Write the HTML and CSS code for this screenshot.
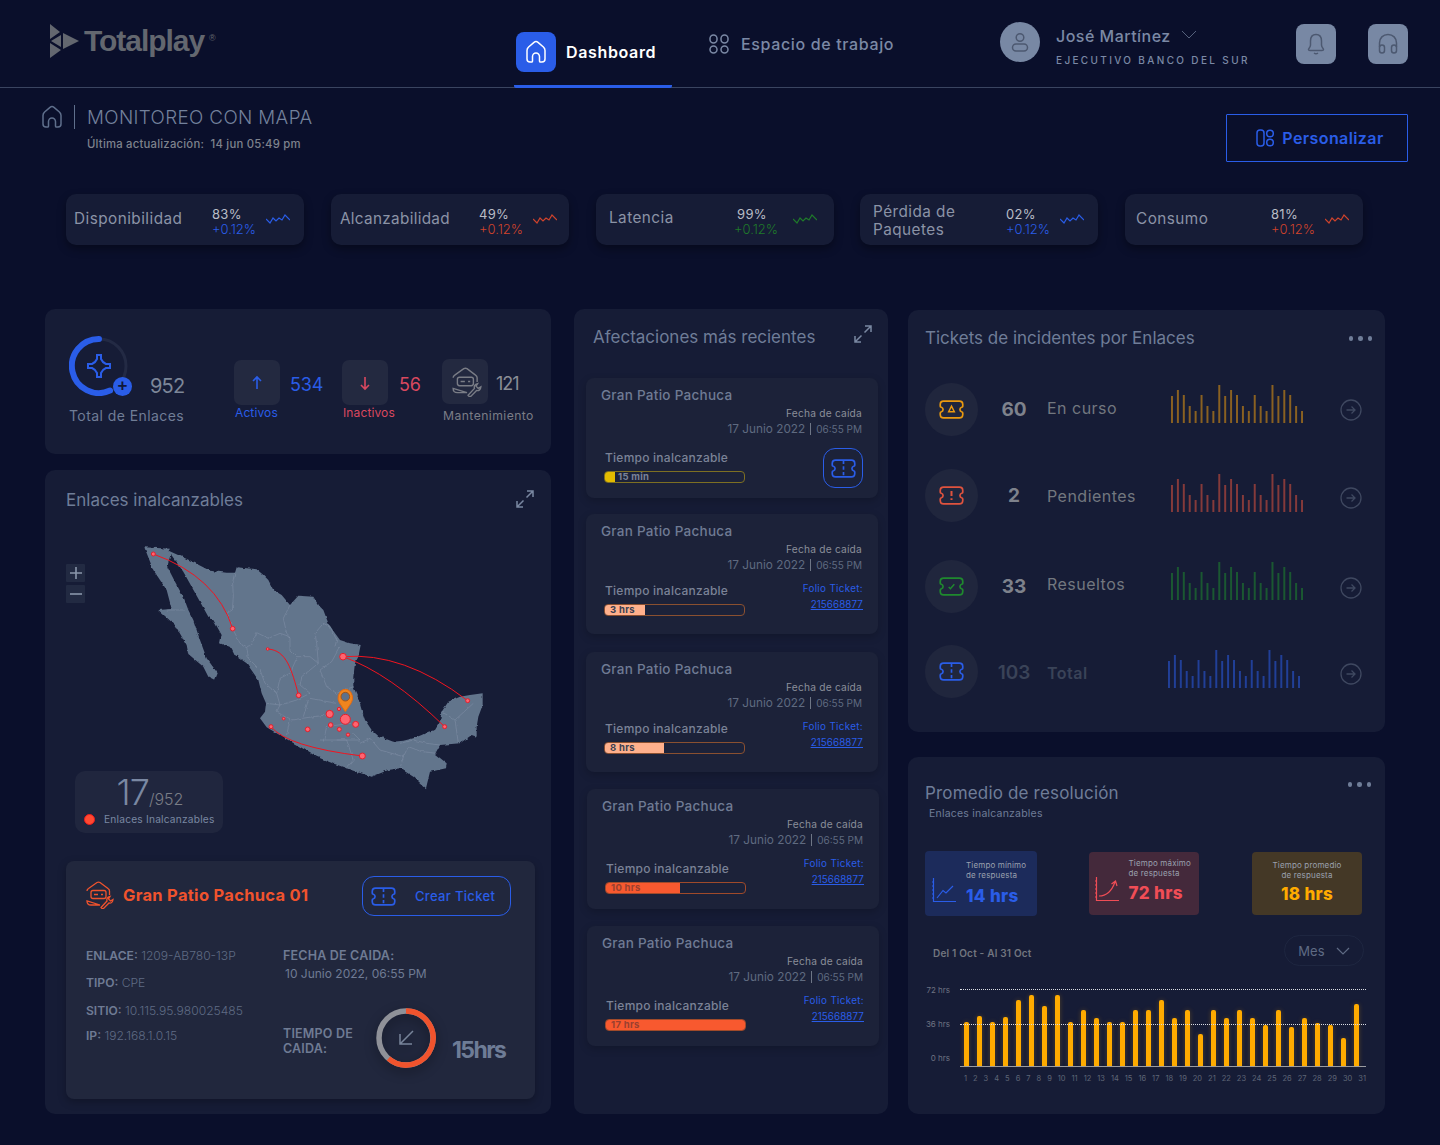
FILE: index.html
```html
<!DOCTYPE html>
<html lang="es">
<head>
<meta charset="utf-8">
<title>Monitoreo con mapa</title>
<link rel="stylesheet" href="styles.css">
</head>
<body>
<svg class="defs" width="0" height="0" aria-hidden="true">
  <symbol id="home" viewBox="0 0 24 24"><path d="M3 19V10.500Q3 8.500 4.600 7L10 2.400Q12 .8 14 2.400L19.400 7Q21 8.500 21 10.500V19Q21 22 18 22H16Q15.500 22 15.500 21V16.500A3.500 3.500 0 0 0 8.500 16.500V21Q8.500 22 8 22H6Q3 22 3 19Z" fill="none" stroke="currentColor" stroke-width="1.500"/></symbol>
  <symbol id="ticket" viewBox="0 0 24 24"><path d="M5 4.500H19Q22 4.500 22 7.500V9Q22 9.800 21 10Q19.500 10.500 19.500 12Q19.500 13.500 21 14Q22 14.200 22 15V16.500Q22 19.500 19 19.500H5Q2 19.500 2 16.500V15Q2 14.200 3 14Q4.500 13.500 4.500 12Q4.500 10.500 3 10Q2 9.800 2 9V7.500Q2 4.500 5 4.500Z" fill="none" stroke="currentColor" stroke-width="1.500"/></symbol>
  <symbol id="expand" viewBox="0 0 18 18"><path d="M10.500 7.500L17 1M11 1H17V7M7.500 10.500L1 17M1 11V17H7" fill="none" stroke="currentColor" stroke-width="1.500"/></symbol>
  <symbol id="bars" viewBox="0 0 135 38" preserveAspectRatio="none"><path d="M1 38V11M7 38V5M13 38V10M19 38V21M25 38V26M31 38V10M37 38V21M43 38V26M49 38V0M55 38V11M61 38V5M67 38V10M73 38V21M79 38V26M85 38V10M91 38V21M97 38V26M103 38V0M109 38V11M115 38V5M121 38V10M127 38V21M133 38V26" stroke="currentColor" stroke-width="2" fill="none"/></symbol>
  <symbol id="arrow" viewBox="0 0 22 22"><circle cx="11" cy="11" r="10" fill="none" stroke="currentColor" stroke-width="1.300"/><path d="M6.500 11H15M11.500 7.500L15 11L11.500 14.500" fill="none" stroke="currentColor" stroke-width="1.300"/></symbol>
  <symbol id="wave" viewBox="0 0 24 12"><path d="M0 5L4 9L7 4L10 7L13 4L16 6L19 1L24 6" fill="none" stroke="currentColor" stroke-width="1.200"/></symbol>
  <symbol id="maint" viewBox="0 0 30 28"><path d="M2 10Q2 8.500 3.500 7.500L12 1.500Q13.500 .7 15 1.500L23 7.500Q24.500 8.500 24.500 10V14M15 24H6Q2 24 2 20Z" fill="none" stroke="currentColor" stroke-width="1.300"/><rect x="6" y="9.500" width="15" height="8" rx="2" fill="none" stroke="currentColor" stroke-width="1.300"/><path d="M9 13.500H13M16 13.500H18" stroke="currentColor" stroke-width="1.300"/><path d="M16 26.500L22 20Q21 16.500 25 15.500L23.500 18L25.500 20L28 18.500Q27.500 22.500 24 22L18.500 27.500Q17 28 16 26.500Z" fill="none" stroke="currentColor" stroke-width="1.300"/></symbol>
</svg>

<header class="topbar">
  <div class="logo">
    <svg class="logo-mark" viewBox="0 0 30 34"><path d="M1 0L11 8L1 15ZM14 9L30 17L14 25ZM12 11V23L2 17ZM1 19L12 26L1 34Z"/></svg>
    <span class="logo-text">Totalplay</span><span class="logo-reg">®</span>
  </div>
  <nav class="nav">
    <a class="nav-item active"><span class="nav-tile"><svg class="ico-24"><use href="#home"/></svg></span><span>Dashboard</span></a>
    <a class="nav-item muted">
      <svg class="ico-work" viewBox="0 0 20 20"><g fill="none" stroke="currentColor" stroke-width="1.500"><rect x="1" y="1" width="7" height="8" rx="3.500"/><rect x="12" y="1" width="7" height="8" rx="3.500"/><rect x="1" y="12" width="7" height="7" rx="3.500"/><rect x="12" y="12" width="7" height="7" rx="3.500"/></g></svg>
      <span>Espacio de trabajo</span>
    </a>
  </nav>
  <div class="user">
    <span class="avatar"><svg viewBox="0 0 24 24" width="24" height="24"><g fill="none" stroke="#4c5870" stroke-width="1.500"><circle cx="12" cy="7.500" r="3.800"/><rect x="4.500" y="14" width="15" height="7" rx="3.500"/></g></svg></span>
    <div class="user-info">
      <div class="user-name">José Martínez <svg class="chev" viewBox="0 0 16 9"><path d="M1 1L8 8L15 1" fill="none" stroke="currentColor"/></svg></div>
      <div class="user-role">EJECUTIVO BANCO DEL SUR</div>
    </div>
  </div>
  <span class="tool tool-first"><svg viewBox="0 0 24 24" width="24" height="24"><path d="M12 2.500C8 2.500 6.500 5.500 6.500 9V13C6.500 15 5 16 4.500 17.500Q4.500 18.500 6 18.500H18Q19.500 18.500 19.500 17.500C19 16 17.500 15 17.500 13V9C17.500 5.500 16 2.500 12 2.500ZM10 21Q12 22.500 14 21" fill="none" stroke="#4c5870" stroke-width="1.500"/></svg></span>
  <span class="tool"><svg viewBox="0 0 24 24" width="24" height="24"><path d="M3.500 15V11C3.500 6 7 2.500 12 2.500S20.500 6 20.500 11V15" fill="none" stroke="#4c5870" stroke-width="1.500"/><rect x="3.500" y="13" width="5" height="8" rx="2.500" fill="none" stroke="#4c5870" stroke-width="1.500"/><rect x="15.500" y="13" width="5" height="8" rx="2.500" fill="none" stroke="#4c5870" stroke-width="1.500"/></svg></span>
</header>

<section class="crumbs">
  <div>
    <div class="crumb-line">
      <svg class="crumb-home"><use href="#home"/></svg>
      <h1>MONITOREO CON MAPA</h1>
    </div>
    <p class="updated">Última actualización:&nbsp; 14 jun 05:49 pm</p>
  </div>
  <button class="customize">
    <svg viewBox="0 0 18 18" width="18" height="18"><g fill="none" stroke="currentColor" stroke-width="1.500"><rect x="1" y="1" width="7" height="16" rx="3"/><circle cx="14" cy="4.500" r="3.300"/><circle cx="14" cy="13.500" r="3.300"/></g></svg>
    Personalizar
  </button>
</section>

<section class="kpis">
  <article class="kpi"><span class="kpi-name">Disponibilidad</span><div class="kpi-val"><b>83%</b><i class="blue">+0.12%</i></div><svg class="wave blue"><use href="#wave"/></svg></article>
  <article class="kpi"><span class="kpi-name">Alcanzabilidad</span><div class="kpi-val"><b>49%</b><i class="red">+0.12%</i></div><svg class="wave red"><use href="#wave"/></svg></article>
  <article class="kpi"><span class="kpi-name">Latencia</span><div class="kpi-val"><b class="ind">99%</b><i class="green">+0.12%</i></div><svg class="wave green"><use href="#wave"/></svg></article>
  <article class="kpi"><span class="kpi-name two">Pérdida de Paquetes</span><div class="kpi-val"><b>02%</b><i class="blue">+0.12%</i></div><svg class="wave blue"><use href="#wave"/></svg></article>
  <article class="kpi"><span class="kpi-name">Consumo</span><div class="kpi-val"><b>81%</b><i class="red">+0.12%</i></div><svg class="wave red"><use href="#wave"/></svg></article>
</section>

<main class="board">
  <div class="col-left">
    <section class="panel total">
      <div class="total-main">
        <div class="total-top">
          <div class="ring">
            <svg viewBox="0 0 60 60" width="60" height="60"><circle cx="30" cy="30" r="27" fill="none" stroke="#232a44" stroke-width="3"/><path d="M30 3A27 27 0 1 0 41 54.600" fill="none" stroke="#2a5de8" stroke-width="6" stroke-linecap="round"/><path d="M28 19H32V23Q33.500 26.500 37 28H41V32H37Q33.500 33.500 32 37V41H28V37Q26.500 33.500 23 32H19V28H23Q26.500 26.500 28 23Z" fill="none" stroke="#2a5de8" stroke-width="2"/></svg>
            <span class="ring-plus">+</span>
          </div>
          <span class="total-num">952</span>
        </div>
        <div class="total-label">Total de Enlaces</div>
      </div>
      <div class="stat stat-a">
        <div class="stat-row"><span class="stat-tile blue"><svg viewBox="0 0 16 16" width="16" height="16"><path d="M8 14V2M4 6L8 2L12 6" fill="none" stroke="currentColor" stroke-width="1.600"/></svg></span><span class="stat-num blue">534</span></div>
        <div class="stat-label blue">Activos</div>
      </div>
      <div class="stat stat-b">
        <div class="stat-row"><span class="stat-tile rose"><svg viewBox="0 0 16 16" width="16" height="16"><path d="M8 2V14M4 10L8 14L12 10" fill="none" stroke="currentColor" stroke-width="1.600"/></svg></span><span class="stat-num rose">56</span></div>
        <div class="stat-label rose">Inactivos</div>
      </div>
      <div class="stat stat-c">
        <div class="stat-row"><span class="stat-tile grey"><svg class="maint"><use href="#maint"/></svg></span><span class="stat-num grey">121</span></div>
        <div class="stat-label grey">Mantenimiento</div>
      </div>
    </section>

    <section class="panel map-panel">
      <div class="panel-head">
        <h2>Enlaces inalcanzables</h2>
        <svg class="expand"><use href="#expand"/></svg>
      </div>
      <div class="map">
        <svg class="map-svg" viewBox="0 0 1320 930" width="440" height="310">
          <defs>
            <filter id="rough" filterUnits="userSpaceOnUse" x="0" y="0" width="1320" height="930">
              <feTurbulence type="fractalNoise" baseFrequency="0.07" numOctaves="2" seed="4" result="n"/>
              <feDisplacementMap in="SourceGraphic" in2="n" scale="9" xChannelSelector="R" yChannelSelector="G"/>
            </filter>
          </defs>
          <g filter="url(#rough)">
            <path class="land" d="M253,52L330,56L326,62L392,92L450,122L500,128L525,128L530,112L590,118L610,135L625,150L640,180L665,195L690,225L715,197L760,200L775,225L790,240L805,280L825,310L840,330L870,340L902,345L895,380L885,400L880,440L880,470L895,505L905,540L915,570L935,600L955,618L1000,635L1030,632L1060,625L1085,615L1105,605L1125,600L1140,575L1145,545L1165,515L1200,500L1230,495L1268,490L1268,525L1255,560L1250,590L1250,620L1235,615L1200,640L1140,645L1125,672L1160,700L1158,715L1110,725L1098,775L1060,740L1020,715L985,720L935,740L880,722L810,697L770,680L720,650L670,622L620,592L600,565L615,545L618,520L605,490L595,450L560,400L525,375L515,355L480,340L485,315L460,270L445,260L420,215L395,170L370,125L332,72L322,110L345,155L372,205L385,240L400,270L420,330L440,385L473,430L465,450L445,440L430,410L385,372L380,345L345,285L295,240L335,237L320,180L280,120Z"/>
            <path class="borders" d="M525,128L518,160L520,200L517,240L500,250L520,300L540,340L560,350M690,225L670,265L680,310L690,320L660,310L625,325L590,308L575,345L560,350M560,350L565,385L600,420L615,460L650,490M690,320L690,360L710,380L750,380L775,400L770,340L765,310L790,280L810,290L830,330L825,350M840,350L815,395L780,420L800,470L830,490L880,470M775,400L725,440L720,465L750,490L710,510L660,525L650,490L660,445L690,430L710,385M620,520L660,525L650,545L690,570L680,615M750,505L830,520M730,560L745,510M695,570L760,560L800,555M790,635L800,590L870,580M830,630L900,630L880,610M780,630L860,630L880,690L860,715M900,640L930,625L960,660L1030,680L1020,715M1030,680L1045,650L1085,665L1130,670M1020,640L1060,630L1100,640L1140,645M1145,545L1185,570L1240,520M1185,570L1195,640M320,240L375,240"/>
          </g>
          <path class="routes" d="M280,72Q470,140 518,296M623,357C680,360 695,420 716,496M849,380Q1030,365 1223,512M849,380Q990,430 1154,590M633,590Q680,650 907,678"/>
          <g class="dots">
            <circle cx="280" cy="72" r="6"/><circle cx="518" cy="296" r="7"/><circle cx="623" cy="357" r="4"/><circle cx="716" cy="496" r="7"/><circle cx="849" cy="380" r="10"/><circle cx="856" cy="568" r="15"/><circle cx="809" cy="552" r="11"/><circle cx="837" cy="537" r="5"/><circle cx="812" cy="585" r="7"/><circle cx="887" cy="583" r="9"/><circle cx="838" cy="598" r="6"/><circle cx="864" cy="614" r="5"/><circle cx="743" cy="598" r="7"/><circle cx="671" cy="566" r="4"/><circle cx="633" cy="590" r="6"/><circle cx="907" cy="678" r="9"/><circle cx="1154" cy="590" r="6"/><circle cx="1223" cy="512" r="6"/>
          </g>
          <path d="M856,545L838,518Q832,508 835,497Q841,478 856,478Q871,478 877,497Q880,508 874,518Z" fill="#f0851e" stroke="#e66a10" stroke-width="3"/>
          <circle cx="856" cy="500" r="13" fill="#5f7189" stroke="#a35518" stroke-width="3"/>
        </svg>
        <div class="zoomers">
          <button aria-label="Acercar"><svg viewBox="0 0 12 12" width="12" height="12"><path d="M0 6H12M6 0V12" stroke="currentColor" stroke-width="1.600"/></svg></button>
          <button aria-label="Alejar"><svg viewBox="0 0 12 12" width="12" height="12"><path d="M0 6H12" stroke="currentColor" stroke-width="1.600"/></svg></button>
        </div>
        <div class="counter">
          <div class="counter-num"><span>17</span><small>/952</small></div>
          <div class="counter-label"><i></i>Enlaces Inalcanzables</div>
        </div>
      </div>
      <article class="detail">
        <div class="detail-head">
          <svg class="detail-ico"><use href="#maint"/></svg>
          <h3>Gran Patio Pachuca 01</h3>
          <button class="new-ticket"><svg class="ico-ticket" viewBox="0 0 24 24"><use href="#ticket"/><path d="M12 5V19" stroke="#2a5de8" stroke-width="1.500" stroke-dasharray="3 2"/></svg><span>Crear Ticket</span></button>
        </div>
        <div class="detail-body">
          <div class="facts">
            <p><b>ENLACE:</b> 1209-AB780-13P</p>
            <p><b>TIPO:</b> CPE</p>
            <p><b>SITIO:</b> 10.115.95.980025485</p>
            <p><b>IP:</b> 192.168.1.0.15</p>
          </div>
          <div class="downtime">
            <p class="down-label">FECHA DE CAIDA:</p>
            <p class="down-date">10 Junio 2022, 06:55 PM</p>
            <div class="down-row">
              <p class="down-label down-time">TIEMPO DE<br>CAIDA:</p>
              <svg class="down-ring" viewBox="0 0 60 60" width="60" height="60"><circle cx="30" cy="30" r="27" fill="none" stroke="#8f9198" stroke-width="5.500"/><path d="M30 3A27 27 0 1 1 12.500 50.500" fill="none" stroke="#f0532d" stroke-width="5.500"/><path d="M37 23L24 36M24 26V36H36" fill="none" stroke="#78849a" stroke-width="1.500"/></svg>
              <span class="down-total">15hrs</span>
            </div>
          </div>
        </div>
      </article>
    </section>
  </div>

  <section class="panel feed">
    <div class="panel-head feed-head">
      <h2>Afectaciones más recientes</h2>
      <svg class="expand"><use href="#expand"/></svg>
    </div>
    <article class="fcard first">
      <h4>Gran Patio Pachuca</h4>
      <p class="f-label">Fecha de caída</p>
      <p class="f-date">17 Junio 2022<span>06:55 PM</span></p>
      <div class="f-row">
        <div class="f-left"><p class="f-time">Tiempo inalcanzable</p><div class="bar bar-y"><i style="width:11px"></i><em>15 min</em></div></div>
        <button class="f-btn"><svg viewBox="0 0 24 24"><use href="#ticket"/><path d="M12 5V19" stroke="#2a5de8" stroke-width="1.500" stroke-dasharray="3 2"/></svg></button>
      </div>
    </article>
    <article class="fcard second">
      <h4>Gran Patio Pachuca</h4>
      <p class="f-label">Fecha de caída</p>
      <p class="f-date">17 Junio 2022<span>06:55 PM</span></p>
      <div class="f-row">
        <div class="f-left"><p class="f-time">Tiempo inalcanzable</p><div class="bar bar-p"><i style="width:41px"></i><em class="dark">3 hrs</em></div></div>
        <div class="folio"><p>Folio Ticket:</p><a>215668877</a></div>
      </div>
    </article>
    <article class="fcard third">
      <h4>Gran Patio Pachuca</h4>
      <p class="f-label">Fecha de caída</p>
      <p class="f-date">17 Junio 2022<span>06:55 PM</span></p>
      <div class="f-row">
        <div class="f-left"><p class="f-time">Tiempo inalcanzable</p><div class="bar bar-p"><i style="width:60px"></i><em class="dark">8 hrs</em></div></div>
        <div class="folio"><p>Folio Ticket:</p><a>215668877</a></div>
      </div>
    </article>
    <article class="fcard shift">
      <h4>Gran Patio Pachuca</h4>
      <p class="f-label">Fecha de caída</p>
      <p class="f-date">17 Junio 2022<span>06:55 PM</span></p>
      <div class="f-row">
        <div class="f-left"><p class="f-time">Tiempo inalcanzable</p><div class="bar bar-o"><i style="width:75px"></i><em class="mid">10 hrs</em></div></div>
        <div class="folio"><p>Folio Ticket:</p><a>215668877</a></div>
      </div>
    </article>
    <article class="fcard shift">
      <h4>Gran Patio Pachuca</h4>
      <p class="f-label">Fecha de caída</p>
      <p class="f-date">17 Junio 2022<span>06:55 PM</span></p>
      <div class="f-row">
        <div class="f-left"><p class="f-time">Tiempo inalcanzable</p><div class="bar bar-o"><i style="width:142px"></i><em class="mid">17 hrs</em></div></div>
        <div class="folio"><p>Folio Ticket:</p><a>215668877</a></div>
      </div>
    </article>
  </section>

  <div class="col-right">
    <section class="panel tickets">
      <div class="panel-head">
        <h2>Tickets de incidentes por Enlaces</h2>
        <span class="more"><i></i><i></i><i></i></span>
      </div>
      <div class="t-row r1">
        <span class="t-circle amber"><svg viewBox="0 0 24 24"><use href="#ticket"/><path d="M12 9L14.500 14H9.500Z" fill="none" stroke="currentColor" stroke-width="1.300"/></svg></span>
        <b class="t-num">60</b><span class="t-label">En curso</span>
        <svg class="t-bars amber"><use href="#bars"/></svg>
        <svg class="t-arrow"><use href="#arrow"/></svg>
      </div>
      <div class="t-row r2">
        <span class="t-circle coral"><svg viewBox="0 0 24 24"><use href="#ticket"/><path d="M12 8V12.500M12 14.500V16" fill="none" stroke="currentColor" stroke-width="1.800"/></svg></span>
        <b class="t-num">2</b><span class="t-label">Pendientes</span>
        <svg class="t-bars coral"><use href="#bars"/></svg>
        <svg class="t-arrow"><use href="#arrow"/></svg>
      </div>
      <div class="t-row r3">
        <span class="t-circle lime"><svg viewBox="0 0 24 24"><use href="#ticket"/><path d="M9.500 12.500L11 14L14.500 10" fill="none" stroke="currentColor" stroke-width="1.300"/></svg></span>
        <b class="t-num">33</b><span class="t-label">Resueltos</span>
        <svg class="t-bars lime"><use href="#bars"/></svg>
        <svg class="t-arrow"><use href="#arrow"/></svg>
      </div>
      <div class="t-row r4">
        <span class="t-circle azure"><svg viewBox="0 0 24 24"><use href="#ticket"/><path d="M12 5V19" stroke="currentColor" stroke-width="1.500" stroke-dasharray="3 2"/></svg></span>
        <b class="t-num">103</b><span class="t-label">Total</span>
        <svg class="t-bars azure"><use href="#bars"/></svg>
        <svg class="t-arrow"><use href="#arrow"/></svg>
      </div>
    </section>

    <section class="panel average">
      <div class="panel-head avg-head">
        <div>
          <h2>Promedio de resolución</h2>
          <p class="avg-sub">Enlaces inalcanzables</p>
        </div>
        <span class="more"><i></i><i></i><i></i></span>
      </div>
      <div class="tiles">
        <div class="tile tile-min">
          <svg class="tile-ico" viewBox="0 0 24 24"><path d="M1.500 0V23.500H24M0 4H1.500M0 8H1.500M0 12H1.500M0 16H1.500M0 20H1.500M5 20L11 12.500L14 15L21 8" fill="none" stroke="currentColor" stroke-width="1.200"/></svg>
          <div><p>Tiempo mínimo<br>de respuesta</p><strong>14 hrs</strong></div>
        </div>
        <div class="tile tile-max">
          <svg class="tile-ico" viewBox="0 0 24 24"><path d="M1.500 0V23.500H24M0 4H1.500M0 8H1.500M0 12H1.500M0 16H1.500M0 20H1.500M4 19Q15 19 20 5M16.500 7L20.500 4L22 9" fill="none" stroke="currentColor" stroke-width="1.200"/></svg>
          <div><p>Tiempo máximo<br>de respuesta</p><strong>72 hrs</strong></div>
        </div>
        <div class="tile tile-avg">
          <div><p>Tiempo promedio<br>de respuesta</p><strong>18 hrs</strong></div>
        </div>
      </div>
      <div class="range">
        <span class="range-text">Del 1 Oct - Al 31 Oct</span>
        <span class="pill">Mes <svg viewBox="0 0 14 8" width="14" height="8"><path d="M1 1L7 7L13 1" fill="none" stroke="currentColor" stroke-width="1.200"/></svg></span>
      </div>
      <div class="chart">
        <div class="y-axis"><span>72 hrs</span><span>36 hrs</span><span>0 hrs</span></div>
        <div class="plot-wrap">
          <div class="plot">
            <i class="rule rule-top"></i><i class="rule rule-mid"></i>
            <span style="height:44px"></span><span style="height:50px"></span><span style="height:44px"></span><span style="height:49px"></span><span style="height:66px"></span><span style="height:71px"></span><span style="height:60px"></span><span style="height:71px"></span><span style="height:44px"></span><span style="height:56px"></span><span style="height:48px"></span><span style="height:44px"></span><span style="height:44px"></span><span style="height:56px"></span><span style="height:56px"></span><span style="height:66px"></span><span style="height:48px"></span><span style="height:56px"></span><span style="height:32px"></span><span style="height:56px"></span><span style="height:48px"></span><span style="height:56px"></span><span style="height:48px"></span><span style="height:41px"></span><span style="height:56px"></span><span style="height:39px"></span><span style="height:48px"></span><span style="height:43px"></span><span style="height:41px"></span><span style="height:28px"></span><span style="height:62px"></span>
          </div>
          <div class="x-axis"><span>1</span><span>2</span><span>3</span><span>4</span><span>5</span><span>6</span><span>7</span><span>8</span><span>9</span><span>10</span><span>11</span><span>12</span><span>13</span><span>14</span><span>15</span><span>16</span><span>17</span><span>18</span><span>19</span><span>20</span><span>21</span><span>22</span><span>23</span><span>24</span><span>25</span><span>26</span><span>27</span><span>28</span><span>29</span><span>30</span><span>31</span></div>
        </div>
      </div>
    </section>
  </div>
</main>
</body>
</html>
```
FILE: styles.css
```css
* { box-sizing: border-box; }
html, body { margin: 0; padding: 0; }
body {
  background: #0a0f2b;
  color: #77849c;
  font-family: "Inter", "Noto Sans", "Liberation Sans", sans-serif;
  width: 1440px;
  height: 1145px;
  overflow: hidden;
  letter-spacing: .02em;
}
h1, h2, h3, h4, p { margin: 0; font-weight: 400; }
button { font-family: inherit; background: none; cursor: pointer; padding: 0; letter-spacing: inherit; }
i, em { font-style: normal; }
.defs { position: absolute; }
.blue { color: #2a5de8; }
.red { color: #d0432c; }
.green { color: #1f7a2a; }
.rose { color: #d9485f; }
.grey { color: #7a7d86; }

/* top bar */
.topbar {
  height: 88px;
  border-bottom: 1px solid #3a4460;
  display: flex;
  align-items: center;
  padding-left: 49px;
}
.logo { display: flex; align-items: flex-start; width: 465px; color: #63676f; height: 34px; margin-top: -6px; }
.logo-mark { width: 30px; height: 34px; fill: #63676f; margin-right: 5px; flex: none; }
.logo-text { font: 700 30px/34px "Liberation Sans", sans-serif; letter-spacing: -1.050px; }
.logo-reg { font: 400 9px/12px "Liberation Sans", sans-serif; margin: 8px 0 0 5px; letter-spacing: 0; }
.nav { display: flex; height: 88px; align-self: flex-start; }
.nav-item { display: flex; align-items: center; font-size: 16px; letter-spacing: .04em; height: 88px; }
.nav-item.active {
  width: 158px;
  padding: 19px 0 0 2px;
  border-bottom: 3px solid #2a5de8;
  border-radius: 0 0 2px 2px;
  color: #fff;
  font-weight: 600;
  gap: 10px;
}
.nav-tile { width: 40px; height: 40px; border-radius: 8px; background: #2a5de8; display: flex; align-items: center; justify-content: center; color: #fff; }
.ico-24 { width: 24px; height: 24px; }
.nav-item.muted { margin-left: 37px; width: 291px; color: #7b89a5; font-weight: 500; gap: 12px; padding-bottom: 1px; align-items: flex-start; padding-top: 34px; }
.nav-item.muted span { line-height: 20px; }
.ico-work { width: 20px; height: 20px; }
.user { display: flex; width: 296px; margin-top: 1px; }
.avatar { width: 40px; height: 40px; border-radius: 50%; background: #7888a4; display: flex; align-items: center; justify-content: center; flex: none; }
.user-info { margin-left: 16px; padding-top: 2px; }
.user-name { font-size: 16px; line-height: 24px; color: #7b89a5; font-weight: 500; letter-spacing: .03em; display: flex; align-items: center; gap: 10px; }
.chev { width: 16px; height: 9px; color: #55617c; margin-top: -3px; }
.user-role { font-size: 10px; line-height: 14px; letter-spacing: 2.350px; margin-top: 5px; color: #7b89a5; font-weight: 500; }
.tool { width: 40px; height: 40px; background: #7888a4; border-radius: 8px; display: flex; align-items: center; justify-content: center; margin-left: 32px; margin-top: 1px; flex: none; }
.tool-first { margin-left: 0; }

/* breadcrumb */
.crumbs { display: flex; justify-content: space-between; padding: 17px 32px 0 41px; height: 106px; }
.crumb-line { display: flex; align-items: center; height: 24px; }
.crumb-home { width: 24px; height: 24px; color: #5f6f8c; margin-left: -1px; }
.crumb-line h1 { font-size: 18.800px; font-weight: 300; color: #73819c; border-left: 1px solid #5f6f8c; margin-left: 10px; padding: 2px 0 0 12px; line-height: 22px; letter-spacing: .02em; }
.updated { font-size: 11.300px; line-height: 14px; margin: 8px 0 0 46px; color: #7e828d; font-weight: 500; letter-spacing: .02em; }
.customize {
  width: 182px; height: 48px; margin-top: 9px; padding-left: 6px;
  border: 1px solid #2a5de8; border-radius: 1px;
  color: #2a5de8; font-size: 16px; font-weight: 600; letter-spacing: .025em;
  display: flex; align-items: center; justify-content: center; gap: 8px;
}

/* KPI strip */
.kpis { display: flex; gap: 27px; padding-left: 66px; }
.kpi {
  width: 238px; height: 51px; background: #161c36; border-radius: 10px;
  box-shadow: 0 4px 8px rgba(0,0,0,.35);
  display: flex; align-items: center; padding-left: 8px; flex: none;
}
.kpi:nth-child(3) { padding-left: 13px; margin-right: -1px; }
.kpi:nth-child(4) { padding-left: 13px; }
.kpi:nth-child(5) { padding-left: 11px; }
.kpi:nth-child(2) { padding-left: 9px; }
.kpi-name { font-size: 15.300px; width: 138px; color: #8b93a6; letter-spacing: .03em; line-height: 18px; flex: none; margin-top: -2px; }
.kpi:nth-child(2) .kpi-name { width: 139px; letter-spacing: .02em; }
.kpi:nth-child(3) .kpi-name { width: 125px; margin-top: -4px; }
.kpi:nth-child(3) .wave { margin-left: 5px; }
.kpi:nth-child(4) .kpi-name { width: 133px; margin-top: 2px; }
.kpi:nth-child(5) .kpi-name { width: 135px; }
.kpi-name.two { padding-right: 30px; }
.kpi-val { font-size: 13px; line-height: 15px; width: 54px; flex: none; margin-top: 4px; }
.kpi-val b { display: block; font-weight: 400; color: #b9bcc6; }
.kpi-val b.ind { padding-left: 3px; }
.kpi-val i { display: block; font-weight: 300; letter-spacing: 0; }
.wave { width: 24px; height: 12px; flex: none; }

/* board */
.board { display: flex; gap: 20px; padding-left: 45px; margin-top: 64px; align-items: flex-start; }
.panel { background: #161c36; border-radius: 10px; }
.col-left { width: 506px; display: flex; flex-direction: column; gap: 16px; flex: none; }
h2 { font-size: 17px; line-height: 20px; color: #6f7d98; letter-spacing: 0; font-weight: 400; }
.panel-head { display: flex; justify-content: space-between; }
.expand { width: 18px; height: 18px; color: #7a88a2; flex: none; }

/* total */
.total { height: 145px; display: flex; padding: 27px 0 0 24px; }
.total-main { width: 165px; flex: none; }
.total-top { display: flex; align-items: flex-end; }
.ring { position: relative; width: 60px; height: 60px; }
.ring-plus {
  position: absolute; left: 44px; top: 41px; width: 19px; height: 19px; border-radius: 50%;
  background: #2a5de8; color: #10183a; font: 700 17px/18px "Liberation Sans", sans-serif; text-align: center;
}
.total-num { font-size: 20px; line-height: 24px; color: #7d8799; letter-spacing: -.8px; margin-left: 21px; margin-bottom: -2px; }
.total-label { margin-top: 11px; font-size: 14px; line-height: 18px; color: #707d96; letter-spacing: .03em; }
.stat { flex: none; margin-top: 24px; }
.stat-a { width: 108px; }
.stat-b { width: 100px; }
.stat-c { margin-top: 23px; }
.stat-row { display: flex; align-items: center; }
.stat-tile { width: 46px; height: 45px; border-radius: 7px; background: #232940; display: flex; align-items: center; justify-content: center; flex: none; }
.maint { width: 32px; height: 30px; margin-left: 4px; }
.stat-num { font-size: 18px; line-height: 24px; margin: 4px 0 0 10px; letter-spacing: -.2px; }
.stat-b .stat-num { margin-left: 11px; }
.stat-c .stat-num { margin-left: 8px; color: #8a8d95; letter-spacing: -1px; }
.stat-label { font-size: 12px; line-height: 16px; margin: 0 0 0 1px; letter-spacing: .01em; }
.stat-c .stat-label { margin-top: 4px; font-size: 12.200px; letter-spacing: .035em; }

/* map */
.map-panel { height: 644px; padding: 20px 17px 0 21px; }
.map { position: relative; height: 310px; margin: 20px 0 0 -6px; }
.map-svg { display: block; }
.land { fill: #62748c; }
.borders { fill: none; stroke: #94a3b8; stroke-width: 1.700; opacity: .6; }
.routes { fill: none; stroke: #f2141f; stroke-width: 3; }
.dots circle { fill: #ff6470; stroke: #e3202c; stroke-width: 3; }
.zoomers { position: absolute; left: 6px; top: 34px; display: flex; flex-direction: column; gap: 3px; }
.zoomers button { width: 19px; height: 18px; border: 0; border-radius: 1px; background: #222a42; color: #8a96ab; display: flex; align-items: center; justify-content: center; }
.counter { position: absolute; left: 15px; top: 241px; width: 148px; height: 62px; background: #20263e; border-radius: 10px; }
.counter-num { text-align: center; line-height: 42px; height: 42px; padding: 0 6px 0 8px; letter-spacing: -1px; }
.counter-num span { font-size: 36px; font-weight: 300; color: #7a88a2; }
.counter-num small { font-size: 16px; color: #7a7d86; letter-spacing: 0; font-weight: 300; }
.counter-label { display: flex; align-items: center; font-size: 10.200px; color: #7a88a2; letter-spacing: .02em; line-height: 14px; margin-top: -1px; }
.counter-label i { width: 11px; height: 11px; border-radius: 50%; background: #ff4a32; border: 1px solid #f01b1b; margin: 0 9px 0 9px; flex: none; }

/* detail */
.detail { margin: 21px -1px 0 0; width: 469px; height: 238px; background: #21273d; border-radius: 8px; box-shadow: 0 3px 8px rgba(0,0,0,.25); padding: 15px 0 0 19px; }
.detail-head { display: flex; align-items: center; height: 40px; }
.detail-ico { width: 30px; height: 28px; color: #f0532d; margin: -2px 0 0 0; flex: none; }
.detail-head h3 { font-size: 16.500px; line-height: 22px; font-weight: 700; color: #f0532d; margin: -2px 0 0 8px; letter-spacing: .018em; }
.new-ticket { margin-left: auto; margin-right: 24px; width: 149px; height: 40px; border: 1px solid #2a5de8; border-radius: 12px; color: #2a5de8; display: flex; align-items: center; font-size: 13px; font-weight: 500; padding-left: 7px; gap: 18px; letter-spacing: .025em; }
.ico-ticket { width: 27px; height: 27px; }
.detail-body { display: flex; margin-top: 32px; padding-left: 1px; }
.facts { width: 197px; display: flex; flex-direction: column; flex: none; }
.facts p { font-size: 12.100px; line-height: 16px; margin-bottom: 11px; color: #5f6b84; font-weight: 300; letter-spacing: 0; white-space: nowrap; }
.facts p:nth-child(1) { margin-bottom: 11px; }
.facts p:nth-child(2) { margin-bottom: 12px; }
.facts p:nth-child(3) { margin-bottom: 9px; }
.facts b { font-weight: 600; color: #6f7b94; }
.down-label { font-size: 12.500px; line-height: 16px; font-weight: 600; color: #6f7b94; letter-spacing: .015em; }
.down-date { font-size: 12px; line-height: 16px; margin: 2px 0 0 2px; color: #6f7b94; letter-spacing: 0; font-weight: 400; }
.down-row { display: flex; align-items: flex-start; margin-top: 26px; }
.down-time { margin-top: 18px; width: 93px; line-height: 15px; flex: none; }
.down-ring { flex: none; filter: drop-shadow(0 4px 6px rgba(0,0,0,.35)); }
.down-total { font-size: 23px; line-height: 28px; font-weight: 700; color: #6e7c96; letter-spacing: -1.600px; margin: 28px 0 0 16px; }

/* feed */
.feed { width: 314px; height: 805px; margin-left: 3px; padding: 18px 10px 0 12px; flex: none; }
.feed-head { padding: 0 6px 0 7px; height: 51px; }
.feed-head .expand { margin-top: -2px; }
.fcard { width: 292px; height: 120px; background: #1c2239; border-radius: 8px; box-shadow: 0 3px 8px rgba(0,0,0,.2); padding: 9px 15px 0 15px; margin-bottom: 17px; }
.fcard.first { margin-bottom: 16px; }
.fcard.second { margin-bottom: 18px; }
.fcard.shift { margin-left: 1px; }
.fcard h4 { font-size: 13.500px; line-height: 17px; font-weight: 500; color: #6f7b94; letter-spacing: .02em; }
.f-label { font-size: 10.200px; line-height: 14px; color: #8b8f99; text-align: right; margin-top: 2px; letter-spacing: .02em; padding-right: 1px; }
.f-date { font-size: 11.800px; line-height: 16px; color: #5f6a80; text-align: right; margin-top: 1px; font-weight: 400; letter-spacing: 0; padding-right: 1px; }
.f-date span { font-size: 10px; border-left: 1px solid #6e7686; margin-left: 5px; padding-left: 5px; letter-spacing: 0; }
.f-row { display: flex; justify-content: space-between; margin-top: 11px; padding-left: 3px; }
.f-time { font-size: 12px; line-height: 14px; font-weight: 500; color: #7b8397; letter-spacing: .02em; margin-left: 1px; }
.bar { position: relative; width: 141px; height: 12px; margin-top: 6px; border: 1px solid; border-radius: 4px; overflow: hidden; }
.bar i { position: absolute; left: -1px; top: -1px; bottom: -1px; display: block; }
.bar em { position: absolute; left: 5px; top: 0; font-size: 9.500px; line-height: 10px; font-weight: 700; letter-spacing: .03em; }
.bar-y { border-color: #7d6f22; }
.bar-y i { background: #e3bb00; }
.bar-y em { left: 13px; color: #7b8397; }
.bar-p { border-color: #8a5030; }
.bar-p i { background: #ffb08c; }
.bar-o { border-color: #a04a2a; }
.bar-o i { background: #f8592f; }
.bar em.dark { color: #3a3f52; }
.bar em.mid { color: #9a4030; }
.first .f-left, .shift .f-left { margin-top: 3px; }
.f-btn { width: 40px; height: 40px; border: 1px solid #2a5de8; border-radius: 12px; color: #2a5de8; display: flex; align-items: center; justify-content: center; }
.f-btn svg { width: 27px; height: 27px; }
.folio { text-align: right; margin-top: -2px; font-size: 9.800px; line-height: 14px; color: #2a5de8; letter-spacing: .01em; }
.folio p { letter-spacing: .035em; }
.folio a { display: block; margin-top: 2px; text-decoration: underline; }

/* tickets */
.col-right { width: 477px; margin-top: 1px; display: flex; flex-direction: column; gap: 25px; flex: none; }
.tickets { height: 422px; padding: 18px 15px 0 17px; }
.more { display: flex; gap: 5px; flex: none; height: 4px; }
.more i { width: 4.500px; height: 4.500px; border-radius: 50%; background: #6f7d98; display: block; }
.tickets .more { margin: 8px -2px 0 0; }
.avg-head .more { margin-right: -8px; }
.t-row { display: flex; align-items: center; height: 53px; }
.r1 { margin-top: 35px; }
.r2 { margin-top: 33px; }
.r3 { margin-top: 38px; }
.r4 { margin-top: 32px; }
.t-circle { width: 53px; height: 53px; border-radius: 50%; background: #20263d; display: flex; align-items: center; justify-content: center; flex: none; }
.t-circle svg { width: 27px; height: 27px; }
.t-num { width: 72px; margin-top: -1px; text-align: center; font-size: 19px; font-weight: 700; color: #7e828c; letter-spacing: 0; flex: none; }
.t-label { width: 124px; margin-left: -3px; font-size: 16px; color: #72777f; letter-spacing: .03em; flex: none; }
.t-bars { width: 133px; height: 38px; flex: none; margin-top: -11px; opacity: .55; }
.t-arrow { width: 22px; height: 22px; color: #3f4860; margin-left: 36px; flex: none; }
.r2 .t-bars, .r4 .t-bars { margin-top: -5px; }
.r2 .t-arrow { margin-top: 5px; }
.r3 .t-arrow { margin-top: 3px; }
.r4 .t-arrow { margin-top: 5px; margin-left: 39px; }
.r4 .t-bars { margin-left: -3px; }
.r1 .t-label { margin-top: -3px; }
.r3 .t-label { margin-top: -5px; }
.r4 .t-num, .r4 .t-label { color: #3a4358; font-weight: 600; margin-top: 2px; }
.amber { color: #ea9a10; }
.coral { color: #e0533e; }
.lime { color: #1f8a2e; }
.azure { color: #2a5de8; }

/* average */
.average { height: 357px; padding: 25px 22px 0 17px; }
.average h2 { margin-top: 1px; letter-spacing: .01em; }
.avg-sub { font-size: 10.500px; line-height: 12px; margin: 5px 0 0 4px; color: #6f7d98; letter-spacing: .02em; }
.tiles { display: flex; justify-content: space-between; margin: 31px 1px 0 0; }
.tile { display: flex; border-radius: 4px; height: 63px; margin-top: 1px; width: 110px; }
.tile p { font-size: 8px; line-height: 10px; color: #9aa0ae; letter-spacing: .02em; }
.tile strong { display: block; font-size: 17px; line-height: 20px; font-weight: 800; letter-spacing: .02em; }
.tile-ico { width: 24px; height: 24px; flex: none; }
.tile-min { width: 112px; height: 65px; margin-top: 0; background: #1c2b5b; color: #2a5de8; padding: 9px 0 0 7px; }
.tile-min .tile-ico { margin: 18px 10px 0 0; }
.tile-min strong { margin-top: 6px; }
.tile-max { background: #44293b; color: #f04d56; padding: 6px 0 0 6px; margin-right: 2px; }
.tile-max .tile-ico { margin: 19px 10px 0 0; }
.tile-max strong { margin-top: 5px; }
.tile-avg { background: #443826; color: #ffab00; padding-top: 8px; justify-content: center; text-align: center; }
.tile-avg strong { margin-top: 4px; }
.range { display: flex; justify-content: space-between; margin: 19px -1px 0 8px; }
.range-text { font-size: 10px; line-height: 12px; font-weight: 600; color: #72767f; margin-top: 12px; letter-spacing: .02em; }
.pill { width: 80px; height: 31px; border: 1px solid #1e2640; border-radius: 16px; font-size: 13px; color: #5f6b84; display: flex; align-items: center; justify-content: center; gap: 11px; letter-spacing: .01em; }
.chart { display: flex; margin: 19px 0 0 0; padding-top: 4px; }
.y-axis { width: 25px; height: 78px; margin: -4px 10px 0 0; display: flex; flex-direction: column; justify-content: space-between; font-size: 8px; line-height: 10px; text-align: right; color: #6e7382; letter-spacing: 0; flex: none; }
.plot-wrap { width: 406px; flex: none; }
.plot { position: relative; height: 78px; border-bottom: 1px solid #9a9ca3; display: flex; align-items: flex-end; gap: 8px; padding-left: 4px; }
.plot span { width: 5px; background: #ffab00; border-radius: 2px 2px 0 0; box-shadow: 0 0 5px rgba(255,171,0,.25); flex: none; position: relative; z-index: 1; }
.rule { position: absolute; left: 0; right: 0; border-top: 1px dotted #d9dce3; }
.rule-top { top: 0; }
.rule-mid { top: 35px; z-index: 2; }
.x-axis { display: flex; justify-content: space-between; padding: 0 0 0 4px; margin-top: 7px; font-size: 7.500px; line-height: 10px; color: #5f6677; letter-spacing: 0; }
```
